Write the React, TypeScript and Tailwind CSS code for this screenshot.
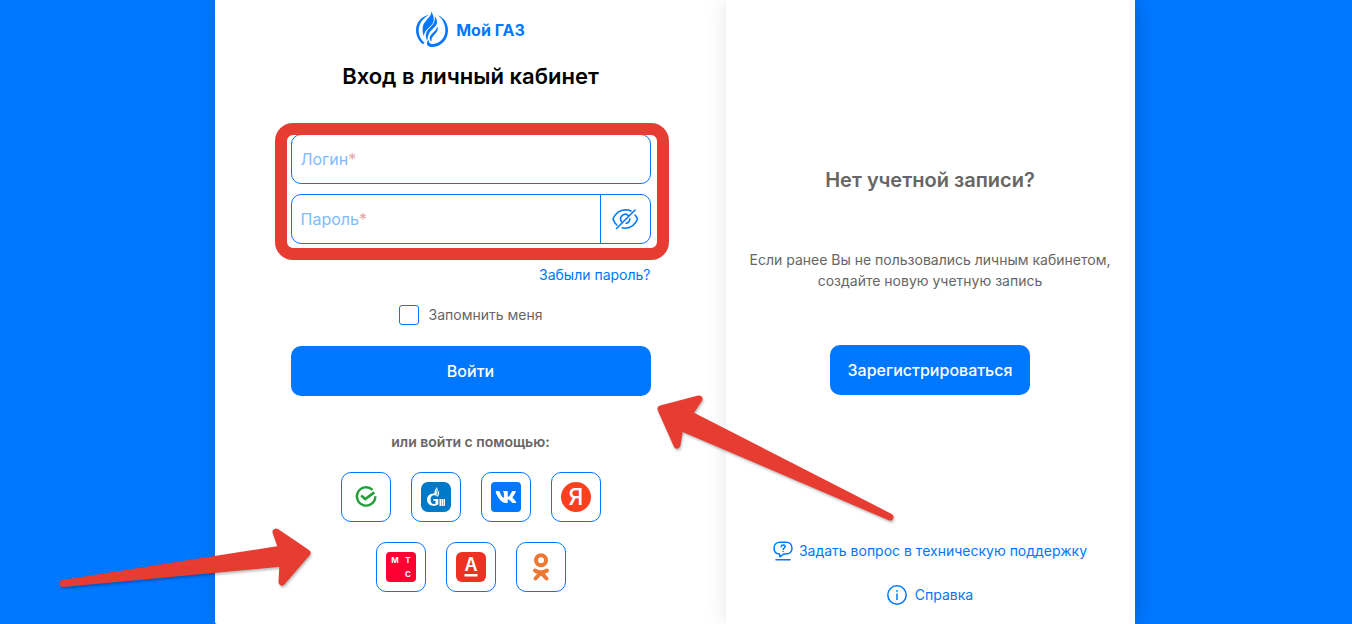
import { useState } from "react";
import { FaVk } from "react-icons/fa";

const Logo = () => (
    <svg viewBox="0 0 96 108" className="h-9 w-8" fill="#0077ff" aria-hidden="true">
        <path d="M40 11C16 16 0 34 0 57c0 18 8 32 21 43l4-5C14 86 8 73 8 58 8 38 20 21 40 11Z" />
        <path d="M66 13c18 7 30 25 30 45 0 27-19 49-46 50-17 0-22-10-12-22 0 11 7 14 16 13 20-3 34-20 34-41 0-18-8-34-22-45Z" />
        <path d="M47 0c0 20-25 28-27 50-1 10 0 18 4 26 0-22 25-28 29-46 2-11-4-20-6-30Z" />
        <path d="M56 15c10 14 9 25-1 34-10 10-20 17-21 41-10-20-1-32 9-41 9-9 16-19 13-34Z" />
        <path d="M64 46c4 12-2 19-9 25-7 7-9 12-9 21-7-7-6-17 2-24 7-6 14-12 16-22Z" />
    </svg>
);

const SberIcon = () => (
    <svg viewBox="0 0 30 30" className="size-[30px]" fill="none" stroke="#21a038" strokeWidth="2.4" aria-hidden="true">
        <path d="M21.500 7.800A9.200 9.200 0 1 0 24.300 14.200" />
        <path d="M10.200 13.400l4.100 3.600 9-6.600" strokeWidth="2.600" />
    </svg>
);

const GazpromIcon = () => (
    <svg viewBox="0 0 30 30" className="size-[30px]" aria-hidden="true">
        <rect width="30" height="30" rx="7" fill="#0079c8" />
        <path fill="#fff" d="M12.500 11.500C8.800 11.700 6 14.200 6 17.600c0 3.600 2.700 6.200 6.300 6.200 2 0 3.700-.4 5-1.300V17h-5v1.700h2.200v2.800c-.5.400-1.100.6-1.900.6-2 0-3-1.800-3-4.500s1.100-4.300 3.400-4.300c1.200 0 2.200.3 3.200 1.400 1-.8 1.900-1.800 1.900-3.300 0-2.300-1.800-3.600-2.300-6.400-1.200 2.200-2.300 3.600-2.300 5.200 0 .5 0 .9.100 1.300Z" />
        <path stroke="#0079c8" strokeWidth=".9" fill="none" d="M15.700 7.500c.7 2 .8 3.800.2 6" />
        <path fill="#fff" d="M18.500 17h1.500v7h-1.500zM20.500 17h1.500v7h-1.500zM22.500 17h1.500v7h-1.500z" />
    </svg>
);

const VkIcon = () => (
    <span className="flex size-[30px] items-center justify-center rounded-sm bg-[#0077ff]">
        <FaVk className="size-[22px] text-white" />
    </span>
);

const YandexIcon = () => (
    <svg viewBox="0 0 30 30" className="size-[30px]" aria-hidden="true">
        <circle cx="15" cy="15" r="15" fill="#fc3f1d" />
        <text x="15" y="23" fill="#fff" fontSize="23" fontWeight="500" textAnchor="middle">Я</text>
    </svg>
);

const MtsIcon = () => (
    <svg viewBox="0 0 30 30" className="size-[30px]" aria-hidden="true">
        <rect width="30" height="30" rx="4" fill="#ff0032" />
        <g fill="#fff" fontSize="8" fontWeight="700" textAnchor="middle">
            <text x="9" y="11">М</text>
            <text x="22" y="11">Т</text>
            <text x="22" y="25">С</text>
        </g>
    </svg>
);

const AlfaIcon = () => (
    <svg viewBox="0 0 30 30" className="size-[30px]" aria-hidden="true">
        <rect width="30" height="30" rx="6" fill="#ef3124" />
        <text x="15" y="19" fill="#fff" fontSize="18" fontWeight="600" textAnchor="middle">А</text>
        <rect x="8.500" y="22" width="13" height="2.500" fill="#fff" />
    </svg>
);

const OkIcon = () => (
    <svg viewBox="0 0 30 30" className="size-[30px]" fill="none" stroke="#ed7834" strokeLinecap="round" aria-hidden="true">
        <circle cx="15" cy="8.300" r="5" strokeWidth="4" />
        <path d="M9 18.500c3.700 2.300 8.300 2.300 12 0M15 20.500l-5.500 6M15 20.500l5.500 6" strokeWidth="4" />
    </svg>
);

const EyeOffIcon = () => (
    <svg viewBox="0 0 28 24" className="h-6 w-7" fill="none" stroke="#0077ff" strokeWidth="1.600" strokeLinecap="round" aria-hidden="true">
        <path d="M5.800 18C4.200 16.500 2.800 14.500 2 12 4.500 6.300 8.800 3 14.500 2.800c2 0 3.900.4 5.500 1.200" />
        <path d="M24 8c1.200 1.200 2 2.500 2.500 4-2.300 5.700-6.500 9-12 9.200-1.100 0-2.200-.1-3.200-.4" />
        <path d="M10.500 14.500a4.600 4.600 0 0 1 7-5.900" />
        <path d="M18.800 12a4.600 4.600 0 0 1-3.600 4.300" />
        <path d="M5.500 21.500 24 3" />
    </svg>
);

const QuestionIcon = () => (
    <svg viewBox="0 0 20 20" className="size-5" fill="none" stroke="#0077ff" strokeWidth="1.500" strokeLinecap="round" strokeLinejoin="round" aria-hidden="true">
        <path d="M7 15.800 6.500 12.900C3 12.900 1 10.500 1 7.300 1 3.500 3.500 1.200 7 1.200h6c3.500 0 6 2.300 6 6 0 3.500-2.500 5.800-6 5.800h-2.200L7 15.800Z" />
        <path d="M8.100 5.700c.1-1.100.9-1.700 2-1.700s2 .7 2 1.700c0 1.400-2 1.500-2 2.800M10.100 10.400v.1" />
        <path d="M3 18.800h14" />
    </svg>
);

const InfoIcon = () => (
    <svg viewBox="0 0 20 20" className="size-5" fill="none" stroke="#0077ff" strokeWidth="1.500" aria-hidden="true">
        <circle cx="10" cy="10" r="9.200" />
        <path d="M10 8.500v6.500M10 5v1.800" />
    </svg>
);

const providers = [
    [
        { name: "Сбер ID", Icon: SberIcon },
        { name: "Газпром ID", Icon: GazpromIcon },
        { name: "VK ID", Icon: VkIcon },
        { name: "Яндекс ID", Icon: YandexIcon },
    ],
    [
        { name: "МТС ID", Icon: MtsIcon },
        { name: "Альфа ID", Icon: AlfaIcon },
        { name: "Одноклассники", Icon: OkIcon },
    ],
];

const LoginForm = () => {
    const [login, setLogin] = useState("");
    const [password, setPassword] = useState("");
    const [visible, setVisible] = useState(false);
    const [remember, setRemember] = useState(false);

    return (
        <form className="w-full max-w-[360px]" onSubmit={(e) => e.preventDefault()}>
            <div className="relative flex flex-col gap-2.5">
                <div className="flex h-[50px] items-center rounded-[10px] border border-[#0077ff] pl-[9px]">
                    <label htmlFor="login" className="text-base text-[#80bbff]">
                        Логин<span className="text-[#e5a5a5]">*</span>
                    </label>
                    <input
                        id="login"
                        type="text"
                        value={login}
                        onChange={(e) => setLogin(e.target.value)}
                        className="h-full min-w-0 flex-1 px-2 focus:outline-none"
                    />
                </div>
                <div className="flex h-[50px] items-center rounded-[10px] border border-[#0077ff] pl-[9px]">
                    <label htmlFor="password" className="text-base text-[#80bbff]">
                        Пароль<span className="text-[#e5a5a5]">*</span>
                    </label>
                    <input
                        id="password"
                        type={visible ? "text" : "password"}
                        value={password}
                        onChange={(e) => setPassword(e.target.value)}
                        className="h-full min-w-0 flex-1 px-2 focus:outline-none"
                    />
                    <button
                        type="button"
                        aria-label="Показать пароль"
                        onClick={() => setVisible(!visible)}
                        className="flex h-full w-[50px] items-center justify-center border-l border-[#0077ff]"
                    >
                        <EyeOffIcon />
                    </button>
                </div>
                {/* highlight around both fields */}
                <div className="pointer-events-none absolute -top-[11px] -right-[18px] -bottom-4 -left-4 rounded-[18px] border-12 border-[#e63c31]" />
            </div>

            <div className="mt-5 text-right text-sm leading-[22px]">
                <a href="#" className="text-[#0077ff]">Забыли пароль?</a>
            </div>

            <label className="mt-[19px] flex h-5 items-center justify-center gap-2.5 text-sm text-[#666]">
                <input
                    type="checkbox"
                    checked={remember}
                    onChange={(e) => setRemember(e.target.checked)}
                    className="size-5 appearance-none rounded-[3px] border border-[#0077ff] checked:bg-[#0077ff]"
                />
                Запомнить меня
            </label>

            <button type="submit" className="mt-[21px] h-[50px] w-full rounded-[10px] bg-[#0077ff] text-base font-medium text-white">
                Войти
            </button>

            <p className="mt-9 text-center text-sm leading-5 font-semibold text-[#666]">или войти с помощью:</p>

            <div className="mt-5 flex flex-col gap-5">
                {providers.map((row, i) => (
                    <div key={i} className="flex justify-center gap-5">
                        {row.map(({ name, Icon }) => (
                            <button
                                key={name}
                                type="button"
                                aria-label={name}
                                className="flex size-[50px] items-center justify-center rounded-[10px] border border-[#0077ff]"
                            >
                                <Icon />
                            </button>
                        ))}
                    </div>
                ))}
            </div>
        </form>
    );
};

const RegisterPanel = () => (
    <aside className="flex w-[409px] shrink-0 flex-col items-center bg-white pr-[17px] pl-4 pt-[166px] text-center shadow-[0_0_20px_rgba(0,0,0,0.1)]">
        <h2 className="text-xl leading-7 font-semibold text-[#666]">Нет учетной записи?</h2>
        <p className="mt-[55px] text-sm leading-[21px] text-[#666]">
            Если ранее Вы не пользовались личным кабинетом, создайте новую учетную запись
        </p>
        <button type="button" className="mt-[54px] h-[50px] w-[200px] rounded-[10px] bg-[#0077ff] text-base font-medium text-white">
            Зарегистрироваться
        </button>
        <a href="#" className="mt-36 flex h-6 items-center gap-1.5 text-sm text-[#0077ff]">
            <QuestionIcon />
            Задать вопрос в техническую поддержку
        </a>
        <a href="#" className="mt-5 flex h-6 items-center gap-2 text-sm text-[#0077ff]">
            <InfoIcon />
            Справка
        </a>
    </aside>
);

// Pointers laid over the card
const Arrows = () => (
    <>
        <svg
            viewBox="0 0 260 68"
            className="pointer-events-none absolute top-[524px] -left-[159px] h-[68px] w-[260px] drop-shadow-[1px_2px_1px_rgba(0,0,0,0.25)]"
            fill="#e63c31"
            stroke="#e63c31"
            strokeWidth="7"
            strokeLinejoin="round"
        >
            <path d="M7 59.500 226 25 220 8 251 29 226 58 227 39Z" />
        </svg>
        <svg
            viewBox="0 0 244 138"
            className="pointer-events-none absolute top-[390px] left-[439px] h-[138px] w-[244px] drop-shadow-[1px_2px_1px_rgba(0,0,0,0.25)]"
            fill="#e63c31"
            stroke="#e63c31"
            strokeWidth="7"
            strokeLinejoin="round"
        >
            <path d="M236 127 35 24 45 9 7 19 23 55 26 37Z" />
        </svg>
    </>
);

export default function App() {
    return (
        <div className="flex min-h-screen justify-center overflow-hidden bg-[#0077ff] pr-0.5 font-['Inter',sans-serif]">
            <div className="relative flex w-full max-w-[920px] rounded-b-xs bg-white shadow-[0_0_20px_rgba(0,0,0,0.1)]">
                <main className="flex flex-1 flex-col items-center pt-[11px] pb-8">
                    <div className="flex items-center gap-2">
                        <Logo />
                        <span className="pt-0.5 text-base font-bold text-[#0077ff]">Мой ГАЗ</span>
                    </div>
                    <h1 className="mt-3 mb-[41px] text-[22px] leading-[34px] font-semibold text-black">Вход в личный кабинет</h1>
                    <LoginForm />
                </main>
                <RegisterPanel />
                <Arrows />
            </div>
        </div>
    );
}
